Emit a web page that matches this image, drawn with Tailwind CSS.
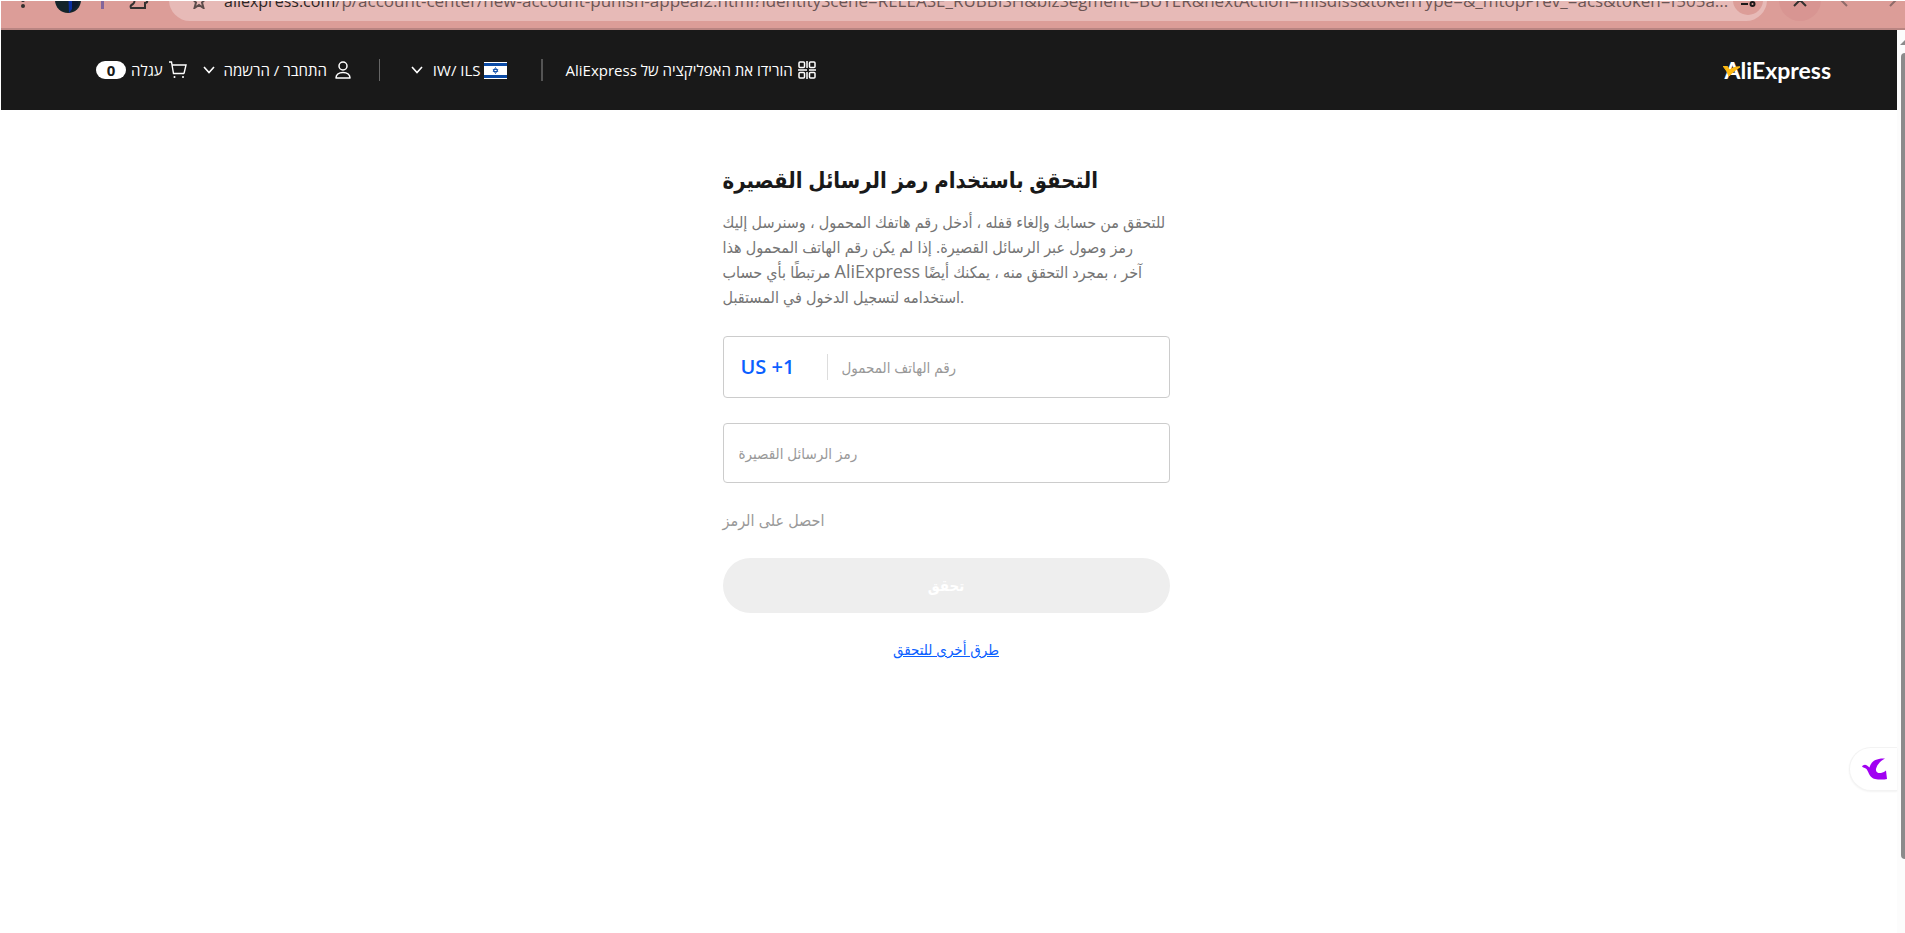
<!DOCTYPE html>
<html lang="ar">
<head>
    <meta charset="utf-8">
    <meta name="viewport" content="width=device-width, initial-scale=1.0">
    <title>AliExpress</title>
    <script src="https://cdn.jsdelivr.net/npm/@tailwindcss/browser@4"></script>
</head>
<body class="min-h-screen flex flex-col bg-white font-['Open_Sans','DejaVu_Sans_Condensed','DejaVu_Sans',sans-serif] text-[#191919]">
<!-- browser toolbar -->
<div class="h-[30px] ml-px border-t border-t-white border-b-2 border-b-[#b98582] bg-[#dc9d98] overflow-hidden flex items-end">
    <div class="w-full h-[42px] mb-[7px] shrink-0 flex items-center text-[#33302f]">
        <button class="ml-[20px]" aria-label="Menu">
            <svg class="w-[4px] h-[18px]" viewBox="0 0 4 18" fill="currentColor"><circle cx="2" cy="3" r="2"/><circle cx="2" cy="9" r="2"/><circle cx="2" cy="15" r="2"/></svg>
        </button>
        <button class="ml-[30px]" aria-label="Profile">
            <svg class="w-[26px] h-[26px]" viewBox="0 0 26 26"><circle cx="13" cy="13" r="13" fill="#14242a"/><path d="M13 0h4v22l-3 4z" fill="#0a2fa0"/><path d="M17 0l6 5v13l-6 6z" fill="#0e1a30"/></svg>
        </button>
        <span class="ml-[20px] w-[3px] h-[18px] bg-[#84659a]"></span>
        <button class="ml-[24px]" aria-label="Extensions">
            <svg class="w-[21px] h-[20px]" viewBox="0 0 21 20" fill="none" stroke="currentColor" stroke-width="2"><path d="M3 18c-1-2 0-3 2-4 2-1 2-5 0-8h12v3c3 0 3 4 0 4v5z"/></svg>
        </button>
        <div class="ml-[20px] mr-[12px] grow min-w-0 h-[42px] rounded-full bg-[#e7bab7] flex items-center pl-[22px] pr-[4px]">
            <button aria-label="Bookmark">
                <svg class="w-[16px] h-[18px]" viewBox="0 0 16 18" fill="none" stroke="#5c4c4b" stroke-width="2"><path d="M8 2l2 5 5 .5-4 4 1.500 5.500L8 14l-4.500 3L5 11.500l-4-4L6 7z"/></svg>
            </button>
            <p class="ml-[17px] grow w-0 pt-[2px] text-[17px] leading-[22px] whitespace-nowrap text-[#6b5554]"><span class="text-[16px] text-[#2c2625]">aliexpress.com</span>/p/account-center/new-account-punish-appeal2.html?identityScene=RELEASE_RUBBISH&amp;bizSegment=BUYER&amp;nextAction=misdiss&amp;tokenType=&amp;_mtopPrev_=acs&amp;token=f505a...</p>
            <button class="w-[30px] h-[30px] shrink-0 rounded-full bg-[#dc9d98] flex items-center justify-center" aria-label="Site information">
                <svg class="w-[16px] h-[16px]" viewBox="0 0 16 16" fill="none" stroke="#1c1a1a" stroke-width="2"><circle cx="3.500" cy="4" r="2"/><path d="M8 4h7M1 12h7"/><circle cx="12.500" cy="12" r="2"/></svg>
            </button>
        </div>
        <button class="w-[42px] h-[42px] rounded-full bg-[#d89592] flex items-center justify-center" aria-label="Stop">
            <svg class="w-[14px] h-[14px]" viewBox="0 0 14 14" fill="none" stroke="currentColor" stroke-width="2"><path d="M1 1l12 12M13 1L1 13"/></svg>
        </button>
        <button class="ml-[18px]" aria-label="Back">
            <svg class="w-[10px] h-[16px]" viewBox="0 0 10 16" fill="none" stroke="#8e6b69" stroke-width="2"><path d="M8 1L2 8l6 6"/></svg>
        </button>
        <button class="ml-[40px] mr-[8px]" aria-label="Forward">
            <svg class="w-[8px] h-[16px]" viewBox="0 0 8 16" fill="none" stroke="#8e6b69" stroke-width="2"><path d="M1 1l6 7-6 6"/></svg>
        </button>
    </div>
</div>

<div class="grow flex">
    <div class="grow min-w-0 relative">
        <header class="ml-px h-[80px] bg-[#191919] text-white flex items-center justify-between pl-[95px] pr-[66px] text-[15px] leading-[20px] whitespace-nowrap">
            <nav class="flex items-center">
                <a href="#" class="flex items-center">
                    <span class="w-[30px] h-[18px] rounded-full bg-white text-[#191919] leading-[18px] font-bold text-center">0</span>
                    <span class="ml-[5px]" dir="rtl">עגלה</span>
                    <svg class="ml-[6px] w-[18px] h-[18px]" viewBox="0 0 18 18" fill="none" stroke="white" stroke-width="1.400"><path d="M0 1h2.500l2 11.500H15M3 4h14l-2 8.500"/><circle cx="5.500" cy="16" r="1" fill="white" stroke="none"/><circle cx="14" cy="16" r="1" fill="white" stroke="none"/></svg>
                </a>
                <button class="ml-[16px] flex items-center">
                    <svg class="w-[12px] h-[8px]" viewBox="0 0 12 8" fill="none" stroke="white" stroke-width="1.600"><path d="M1 1l5 5.500L11 1"/></svg>
                    <span class="ml-[9px]" dir="rtl">התחבר / הרשמה</span>
                    <svg class="ml-[8px] w-[16px] h-[18px]" viewBox="0 0 16 18" fill="none" stroke="white" stroke-width="1.500"><circle cx="8" cy="5" r="4"/><path d="M1 17c0-3 2.500-5.500 7-5.500s7 2.500 7 5.500z" stroke-linejoin="round"/></svg>
                </button>
                <span class="ml-[28px] w-px h-[22px] bg-[#666]"></span>
                <button class="ml-[31px] flex items-center">
                    <svg class="w-[12px] h-[8px]" viewBox="0 0 12 8" fill="none" stroke="white" stroke-width="1.600"><path d="M1 1l5 5.500L11 1"/></svg>
                    <span class="ml-[10px]">IW/ ILS</span>
                    <svg class="ml-[3px] w-[23px] h-[17px]" viewBox="0 0 23 17"><path d="M0 0h23v17H0z" fill="#fff"/><path d="M0 1h23v3H0zM0 13h23v3H0z" fill="#0b4ba6"/><path d="M11.500 5.500l2.300 4H9.200zM11.500 11.500l-2.300-4h4.600z" fill="none" stroke="#0b4ba6" stroke-width=".9"/></svg>
                </button>
                <span class="ml-[34px] w-[2px] h-[22px] bg-[#545454]"></span>
                <a href="#" class="ml-[23px] flex items-center">
                    <span dir="rtl">הורידו את האפליקציה של AliExpress</span>
                    <svg class="ml-[5px] w-[18px] h-[18px]" viewBox="0 0 18 18" fill="none" stroke="white" stroke-width="1.500"><rect x="1" y="1" width="5.500" height="5.500" rx="1"/><rect x="11.500" y="1" width="5.500" height="5.500" rx="1"/><rect x="1" y="11.500" width="5.500" height="5.500" rx="1"/><rect x="11.500" y="11.500" width="5.500" height="5.500" rx="1"/><path d="M9 0v7M0 9h9M11 9h7M9 11v7"/></svg>
                </a>
            </nav>
            <a href="#" class="relative font-['Lato','Open_Sans',sans-serif] font-bold text-[23px] leading-[26px]">AliExpress
                <svg class="absolute left-[-2px] top-[9px] w-[17px] h-[10px]" viewBox="0 0 17 10"><path d="M0 0l4.500 .8L6.500 4.500C9 2 12 .8 17 .8 12 4 9 6 6 10 4.500 6 3 3 0 0z" fill="#fdb913" stroke="#fdb913" stroke-width="1.200"/></svg>
            </a>
        </header>

        <div class="pr-[5px]">
            <main class="w-[447px] max-w-full mx-auto pt-[49px]">
                <h1 class="text-[22px] leading-[40px] font-bold whitespace-nowrap">التحقق باستخدام رمز الرسائل القصيرة</h1>
                <p class="mt-[11px] text-[16px] leading-[25px] text-[#757575] whitespace-nowrap">
                    للتحقق من حسابك وإلغاء قفله ، أدخل رقم هاتفك المحمول ، وسنرسل إليك<br>
                    رمز وصول عبر الرسائل القصيرة. إذا لم يكن رقم الهاتف المحمول هذا<br>
                    مرتبطًا بأي حساب <span class="text-[18px] leading-none">AliExpress</span> آخر ، بمجرد التحقق منه ، يمكنك أيضًا<br>
                    استخدامه لتسجيل الدخول في المستقبل.
                </p>
                <form class="mt-[26px]">
                    <div class="h-[62px] border border-[#ccc] rounded-[4px] flex items-center">
                        <button type="button" class="ml-[17px] w-[86px] text-left text-[20px] leading-[24px] font-semibold text-[#0a60ff]">US +1</button>
                        <input type="tel" aria-label="رقم الهاتف المحمول" placeholder="رقم الهاتف المحمول" class="h-[26px] grow min-w-0 border-l border-[#ddd] pl-[14px] text-[15px] placeholder:text-[#999] outline-none">
                    </div>
                    <input type="text" aria-label="رمز الرسائل القصيرة" placeholder="رمز الرسائل القصيرة" class="mt-[25px] w-full h-[60px] border border-[#ccc] rounded-[4px] px-[15px] text-[15px] placeholder:text-[#999] outline-none">
                    <button type="button" class="mt-[25px] block text-[16px] leading-[24px] text-[#999]">احصل على الرمز</button>
                    <button type="submit" class="mt-[26px] w-full h-[55px] rounded-full bg-[#eee] text-[15px] font-bold text-white">تحقق</button>
                </form>
                <p class="mt-[24px] text-center text-[15px] leading-[24px]">
                    <a href="#" class="underline text-[#0a60ff]">طرق أخرى للتحقق</a>
                </p>
            </main>
        </div>

        <!-- extension button on the page edge -->
        <button class="absolute right-0 top-[717px] w-[48px] h-[44px] pl-[12px] rounded-l-full bg-white border border-r-0 border-[#f3f3f3] shadow-xs" aria-label="Assistant">
            <svg class="w-[25px] h-[22px]" viewBox="0 0 25 22"><path d="M0 8.500C1 7 3 6 5 7.500L7.500 9.500C9 4 13 0 23 .5 18 3 15 7 14 11 13.500 14 16 15.500 19 15 21 14.500 23 13.500 24 12.500L25 21C21 22 16 21.500 13 21 8 20 7 15 4.500 11 3 9.500 1 10 0 8.500z" fill="#a100f2"/></svg>
        </button>
    </div>
    <!-- scrollbar -->
    <div class="w-[8px] shrink-0 bg-[#fcfcfc] flex flex-col items-end">
        <svg class="mt-[10px] w-[5px] h-[5px]" viewBox="0 0 5 5"><path d="M0 5l5-5v5z" fill="#8b8b8b"/></svg>
        <div class="mt-[8px] w-[4px] h-[806px] rounded-l-full bg-[#8b8b8b]"></div>
    </div>
</div>
</body>
</html>
